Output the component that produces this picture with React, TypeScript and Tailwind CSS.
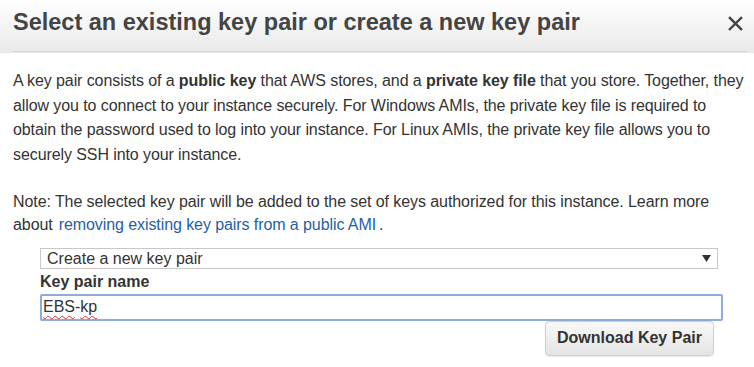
import React from "react";

const Squiggle = ({ children }: { children: React.ReactNode }) => (
  <span className="underline decoration-wavy decoration-[#d03030] decoration-[1px] underline-offset-[3px]">
    {children}
  </span>
);

const KeyPairDialog = () => {
  return (
    <div className="w-[754px] h-[367px] bg-white overflow-hidden font-['Liberation_Sans',Arial,sans-serif] text-[#333]">
      <div className="h-[53px] bg-gradient-to-b from-white to-[#e9e9e9] pl-[13px] pr-[7px]">
        <div className="h-[52px] flex items-center justify-between border-b border-[#d4d4d4] pb-[5px]">
          <h2 className="text-[23.5px] font-bold text-[#444]">
            Select an existing key pair or create a new key pair
          </h2>
          <svg width="15" height="15" viewBox="0 0 16 16" className="mr-[4px]">
            <path d="M2 2 L14 14 M14 2 L2 14" stroke="#444" strokeWidth="2.6" strokeLinecap="square" />
          </svg>
        </div>
      </div>

      <div className="pl-[13px] pr-[4px] pt-[16px] text-[16px] leading-[24.5px]">
        <p className="whitespace-nowrap tracking-[-0.09px]">
          A key pair consists of a <b>public key</b> that AWS stores, and a <b>private key file</b> that you
          store. Together, they
          <br />
          allow you to connect to your instance securely. For Windows AMIs, the private key file is required to
          <br />
          obtain the password used to log into your instance. For Linux AMIs, the private key file allows you to
          <br />
          securely SSH into your instance.
        </p>
        <p className="mt-[23px] leading-[23px] whitespace-nowrap tracking-[-0.08px]">
          Note: The selected key pair will be added to the set of keys authorized for this instance. Learn more
          <br />
          about
          <a href="#" className="text-[#1f5fa8] ml-[6px]">
            removing existing key pairs from a public AMI
          </a>
          <span className="ml-[3px]">.</span>
        </p>

        <div className="ml-[27px] mt-[12px] w-[683px]">
          <div className="w-[678px] h-[21px] border border-[#c8c8c8] flex items-center justify-between pl-[6px] pr-[6px]">
            <span className="leading-none">Create a new key pair</span>
            <svg width="9" height="7" viewBox="0 0 9 7">
              <path d="M0 0 H9 L4.5 7 Z" fill="#333" />
            </svg>
          </div>
          <div className="font-bold mt-[3px] leading-[20px]">Key pair name</div>
          <div className="w-[683px] h-[27px] mt-[2px] border-2 border-[#8eacdb] rounded-[2px] flex items-center pl-[1px]">
            <span>
              <Squiggle>EBS</Squiggle>-<Squiggle>kp</Squiggle>
            </span>
          </div>
          <div className="flex justify-end pr-[9px]">
            <button className="w-[169px] h-[35px] rounded-[4px] border border-[#cfcfcf] bg-gradient-to-b from-[#f9f9f9] to-[#e4e4e4] font-bold text-[#333] text-[16px] shadow-[0_1px_1px_rgba(0,0,0,0.08)]">
              Download Key Pair
            </button>
          </div>
        </div>
      </div>
    </div>
  );
};

export default function App() {
  return <KeyPairDialog />;
}
